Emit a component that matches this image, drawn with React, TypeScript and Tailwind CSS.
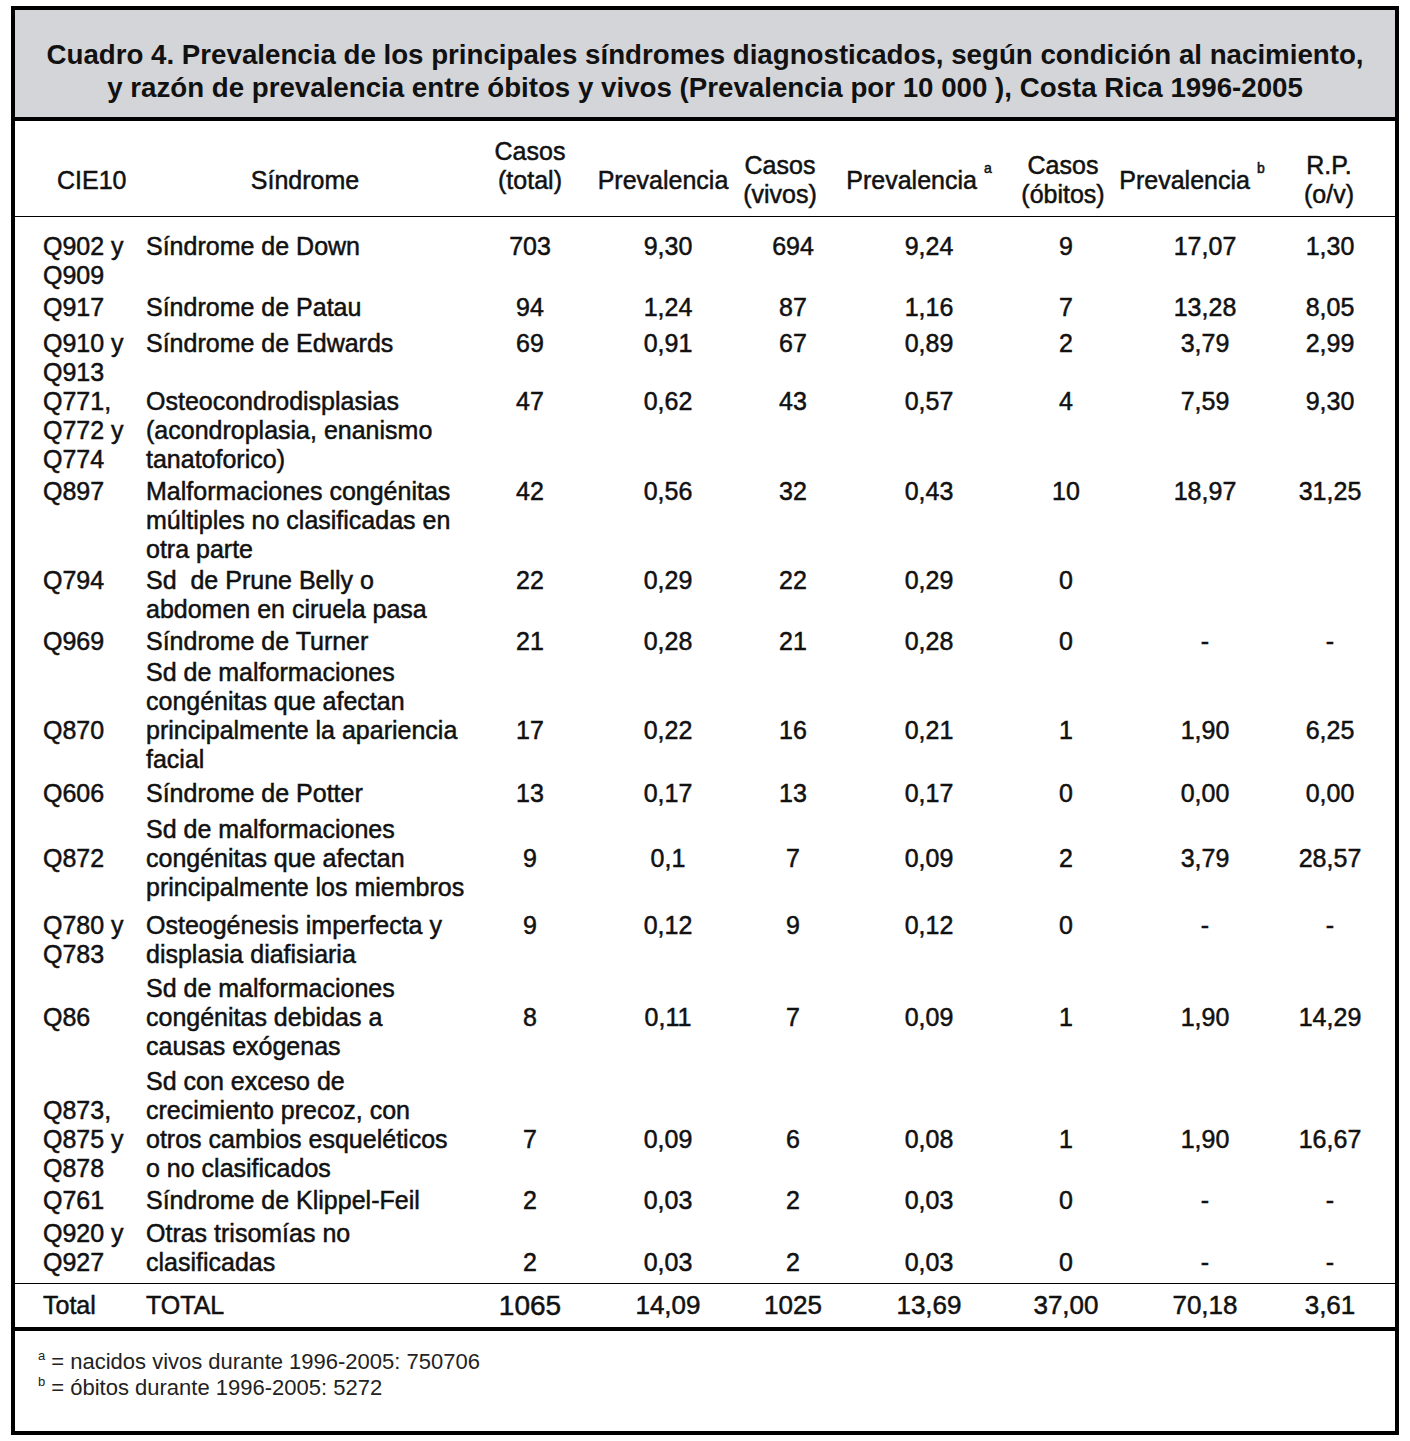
const BODY_COLS = 'grid grid-cols-[125px_330px_120px_156px_94px_178px_96px_182px_68px]'
const HEAD_COLS = 'grid grid-cols-[125px_330px_120px_146px_88px_190px_98px_160px_114px]'

const OFF = ['', 'pt-[29px]', 'pt-[58px]']

type Row = {
  cie: string[]
  cieAt?: number
  sd: string[]
  valAt?: number
  vals: string[]
  gap: string
}

const ROWS: Row[] = [
  { cie: ['Q902 y', 'Q909'], sd: ['Síndrome de Down'], vals: ['703', '9,30', '694', '9,24', '9', '17,07', '1,30'], gap: 'mt-0' },
  { cie: ['Q917'], sd: ['Síndrome de Patau'], vals: ['94', '1,24', '87', '1,16', '7', '13,28', '8,05'], gap: 'mt-[3px]' },
  { cie: ['Q910 y', 'Q913'], sd: ['Síndrome de Edwards'], vals: ['69', '0,91', '67', '0,89', '2', '3,79', '2,99'], gap: 'mt-[7px]' },
  {
    cie: ['Q771,', 'Q772 y', 'Q774'],
    sd: ['Osteocondrodisplasias', '(acondroplasia, enanismo', 'tanatoforico)'],
    vals: ['47', '0,62', '43', '0,57', '4', '7,59', '9,30'],
    gap: 'mt-0',
  },
  {
    cie: ['Q897'],
    sd: ['Malformaciones congénitas', 'múltiples no clasificadas en', 'otra parte'],
    vals: ['42', '0,56', '32', '0,43', '10', '18,97', '31,25'],
    gap: 'mt-[3px]',
  },
  { cie: ['Q794'], sd: ['Sd  de Prune Belly o', 'abdomen en ciruela pasa'], vals: ['22', '0,29', '22', '0,29', '0', '', ''], gap: 'mt-[2px]' },
  { cie: ['Q969'], sd: ['Síndrome de Turner'], vals: ['21', '0,28', '21', '0,28', '0', '-', '-'], gap: 'mt-[3px]' },
  {
    cie: ['Q870'],
    cieAt: 2,
    sd: ['Sd de malformaciones', 'congénitas que afectan', 'principalmente la apariencia', 'facial'],
    valAt: 2,
    vals: ['17', '0,22', '16', '0,21', '1', '1,90', '6,25'],
    gap: 'mt-[2px]',
  },
  { cie: ['Q606'], sd: ['Síndrome de Potter'], vals: ['13', '0,17', '13', '0,17', '0', '0,00', '0,00'], gap: 'mt-[5px]' },
  {
    cie: ['Q872'],
    cieAt: 1,
    sd: ['Sd de malformaciones', 'congénitas que afectan', 'principalmente los miembros'],
    valAt: 1,
    vals: ['9', '0,1', '7', '0,09', '2', '3,79', '28,57'],
    gap: 'mt-[7px]',
  },
  {
    cie: ['Q780 y', 'Q783'],
    sd: ['Osteogénesis imperfecta y', 'displasia diafisiaria'],
    vals: ['9', '0,12', '9', '0,12', '0', '-', '-'],
    gap: 'mt-[9px]',
  },
  {
    cie: ['Q86'],
    cieAt: 1,
    sd: ['Sd de malformaciones', 'congénitas debidas a', 'causas exógenas'],
    valAt: 1,
    vals: ['8', '0,11', '7', '0,09', '1', '1,90', '14,29'],
    gap: 'mt-[5px]',
  },
  {
    cie: ['Q873,', 'Q875 y', 'Q878'],
    cieAt: 1,
    sd: ['Sd con exceso de', 'crecimiento precoz, con', 'otros cambios esqueléticos', 'o no clasificados'],
    valAt: 2,
    vals: ['7', '0,09', '6', '0,08', '1', '1,90', '16,67'],
    gap: 'mt-[6px]',
  },
  { cie: ['Q761'], sd: ['Síndrome de Klippel-Feil'], vals: ['2', '0,03', '2', '0,03', '0', '-', '-'], gap: 'mt-[3px]' },
  {
    cie: ['Q920 y', 'Q927'],
    sd: ['Otras trisomías no', 'clasificadas'],
    valAt: 1,
    vals: ['2', '0,03', '2', '0,03', '0', '-', '-'],
    gap: 'mt-[4px]',
  },
]

const TOTALS = ['1065', '14,09', '1025', '13,69', '37,00', '70,18', '3,61']

function Lines({ lines }: { lines: string[] }) {
  return (
    <>
      {lines.map((l, i) => (
        <div key={i} className="whitespace-pre">{l}</div>
      ))}
    </>
  )
}

export default function App() {
  return (
    <div className="w-[1410px] h-[1441px] bg-white pt-[6px] pl-[11px] [font-family:Liberation_Sans,Arial,sans-serif] text-[#111]">
      <div className="w-[1388px] h-[1429px] border-4 border-black flex flex-col">
        {/* title */}
        <div className="h-[111px] bg-[#d3d5d8] border-b-4 border-black pt-[28px] text-center text-[27.7px] leading-[33px] font-bold whitespace-nowrap">
          Cuadro 4. Prevalencia de los principales síndromes diagnosticados, según condición al nacimiento,
          <br />
          y razón de prevalencia entre óbitos y vivos (Prevalencia por 10 000 ), Costa Rica 1996-2005
        </div>

        <div className="text-[25px] leading-[29px] [-webkit-text-stroke:0.5px_#111]">
          {/* column headers */}
          <div className={`${HEAD_COLS} h-[96px] border-b border-black pt-[23px] items-center`}>
            <div className="pl-[42px]">CIE10</div>
            <div className="text-center">Síndrome</div>
            <div className="text-center -mt-[29px]">
              Casos
              <br />
              (total)
            </div>
            <div className="text-center">Prevalencia</div>
            <div className="text-center whitespace-nowrap">
              Casos
              <br />
              (vivos)
            </div>
            <div className="text-center whitespace-nowrap">
              Prevalencia <sup className="text-[14px] align-[9px]">a</sup>
            </div>
            <div className="text-center whitespace-nowrap">
              Casos
              <br />
              (óbitos)
            </div>
            <div className="text-center whitespace-nowrap">
              Prevalencia <sup className="text-[14px] align-[9px]">b</sup>
            </div>
            <div className="text-center">
              R.P.
              <br />
              (o/v)
            </div>
          </div>

          {/* rows */}
          <div className="pt-[15px]">
            {ROWS.map((r, i) => (
              <div key={i} className={`${BODY_COLS} ${r.gap}`}>
                <div className={`pl-[28px] whitespace-nowrap ${OFF[r.cieAt ?? 0]}`}>
                  <Lines lines={r.cie} />
                </div>
                <div className="pl-[6px]">
                  <Lines lines={r.sd} />
                </div>
                {r.vals.map((v, j) => (
                  <div key={j} className={`text-center ${OFF[r.valAt ?? 0]}`}>
                    {v}
                  </div>
                ))}
              </div>
            ))}
          </div>

          {/* total */}
          <div className={`${BODY_COLS} mt-[6px] h-[48px] border-t border-b-4 border-black items-center`}>
            <div className="pl-[28px]">Total</div>
            <div className="pl-[6px]">TOTAL</div>
            {TOTALS.map((v, j) => (
              <div key={j} className={`text-center ${j === 0 ? 'text-[28px]' : 'text-[26px]'}`}>
                {v}
              </div>
            ))}
          </div>
        </div>

        {/* footnotes */}
        <div className="pt-[18px] pl-[23px] text-[22px] leading-[26px] text-[#222]">
          <div>
            <sup className="text-[13px] align-[3px] mr-[6px]">a</sup>= nacidos vivos durante 1996-2005: 750706
          </div>
          <div>
            <sup className="text-[13px] align-[3px] mr-[6px]">b</sup>= óbitos durante 1996-2005: 5272
          </div>
        </div>
      </div>
    </div>
  )
}
